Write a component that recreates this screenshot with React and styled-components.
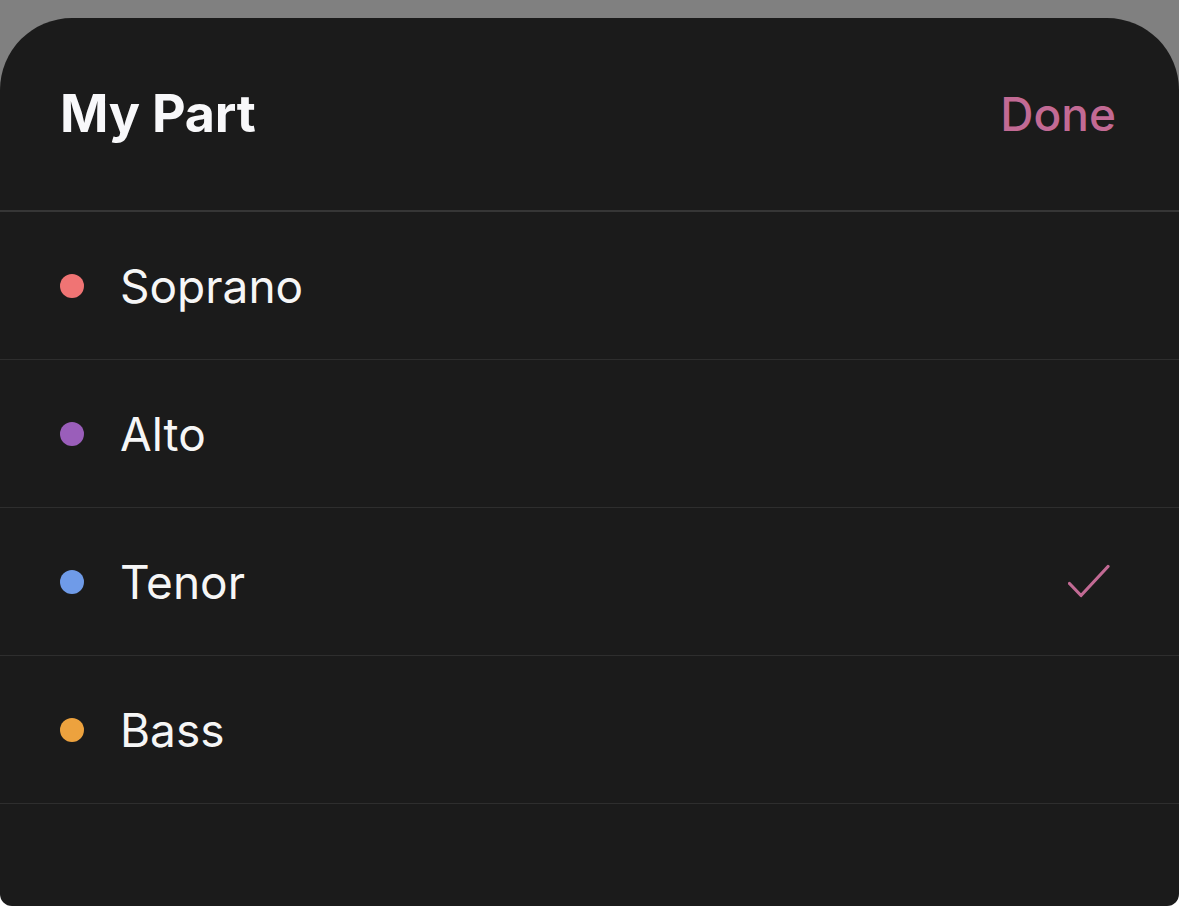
import React, { Component } from 'react';
import styled, { createGlobalStyle } from 'styled-components';

const GlobalStyle = createGlobalStyle`
  html, body {
    margin: 0;
    padding: 0;
    background: #ffffff;
  }
  body {
    font-family: Inter, "Noto Sans", sans-serif;
    -webkit-font-smoothing: antialiased;
  }
`;

const Backdrop = styled.div`
  height: 906px;
  padding-top: 18px;
  box-sizing: border-box;
  background: linear-gradient(#808080 0, #808080 120px, #ffffff 120px);
`;

const Sheet = styled.div`
  height: 100%;
  background: #1b1b1b;
  border-radius: 72px 72px 12px 12px;
  display: flex;
  flex-direction: column;
  overflow: hidden;
`;

const Header = styled.header`
  height: 191px;
  display: flex;
  align-items: center;
  justify-content: space-between;
  padding: 0 63px 1px 60px;
  border-bottom: 2px solid #363636;
`;

const Title = styled.h1`
  margin: 0;
  color: #f8f8fa;
  font-size: 52px;
  font-weight: 650;
  letter-spacing: -0.2px;
`;

const DoneButton = styled.button`
  border: 0;
  background: none;
  padding: 0;
  color: #c26a94;
  font-family: inherit;
  font-size: 46px;
  font-weight: 500;
  cursor: pointer;
`;

const List = styled.ul`
  list-style: none;
  margin: 0;
  padding: 0;
`;

const Row = styled.li`
  height: 147px;
  display: flex;
  align-items: center;
  padding: 0 69px 0 60px;
  border-bottom: 1px solid #2e2e2e;
`;

const Dot = styled.span`
  width: 24px;
  height: 24px;
  border-radius: 50%;
  background: ${p => p.color};
  flex-shrink: 0;
`;

const Label = styled.span`
  margin-left: 36px;
  flex: 1;
  color: #f6f6f6;
  font-size: 46px;
  font-weight: 400;
`;

const Check = () => (
  <svg width="42" height="36" viewBox="0 0 42 36" fill="none">
    <path d="M1.5 19.5 L13 31.5 L40 2.5" stroke="#c26a94" strokeWidth="3.2" strokeLinecap="round" strokeLinejoin="round" />
  </svg>
);

const parts = [
  { name: 'Soprano', color: '#f07474' },
  { name: 'Alto', color: '#9a5eba' },
  { name: 'Tenor', color: '#6f9be8' },
  { name: 'Bass', color: '#eda23e' },
];

class App extends Component {
  constructor(props) {
    super(props);
    this.state = { selected: 'Tenor' };
  }

  render() {
    const { selected } = this.state;
    return (
      <>
        <GlobalStyle />
        <Backdrop>
          <Sheet>
            <Header>
              <Title>My Part</Title>
              <DoneButton>Done</DoneButton>
            </Header>
            <List>
              {parts.map(part => (
                <Row key={part.name} onClick={() => this.setState({ selected: part.name })}>
                  <Dot color={part.color} />
                  <Label>{part.name}</Label>
                  {selected === part.name && <Check />}
                </Row>
              ))}
            </List>
          </Sheet>
        </Backdrop>
      </>
    );
  }
}

export default App;
